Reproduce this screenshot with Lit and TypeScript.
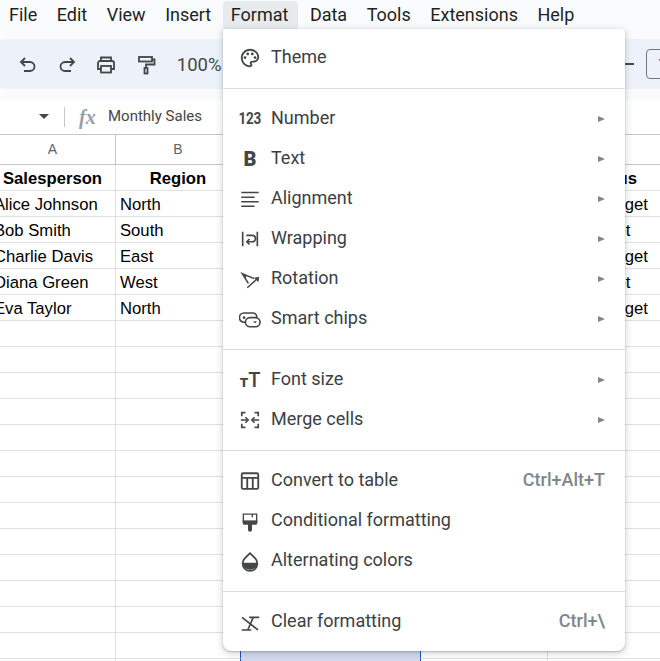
import { LitElement, html, css, svg } from "lit";
import { customElement } from "lit/decorators.js";

const ic = (body: unknown, cls = "ic") => html`<svg class=${cls} viewBox="0 0 24 24" fill="none" stroke="currentColor" stroke-width="2">${body}</svg>`;

const icons: Record<string, unknown> = {
  theme: ic(svg`<path stroke="none" fill="currentColor" fill-rule="evenodd" d="M12 2C6.490 2 2 6.490 2 12s4.490 10 10 10c1.380 0 2.500-1.120 2.500-2.500 0-.610-.230-1.200-.640-1.670-.080-.100-.130-.210-.130-.330 0-.280.220-.500.500-.500H16c3.310 0 6-2.690 6-6 0-4.960-4.490-9-10-9zm0 18c-4.410 0-8-3.590-8-8s3.590-8 8-8c4.410 0 8 3.140 8 7 0 2.210-1.790 4-4 4h-1.770c-1.380 0-2.500 1.120-2.500 2.500 0 .600.220 1.160.600 1.630.110.120.170.250.170.370 0 .280-.220.500-.500.500z"/><g stroke="none" fill="currentColor"><circle cx="6.500" cy="11.500" r="1.500"/><circle cx="9.500" cy="7.500" r="1.500"/><circle cx="14.500" cy="7.500" r="1.500"/><circle cx="17.500" cy="11.500" r="1.500"/></g>`),
  number: html`<span class="glyph num">123</span>`,
  text: html`<span class="glyph bold">B</span>`,
  align: ic(svg`<path stroke-width="1.700" d="M2.500 5h19M2.500 10h14.500M2.500 15h19M2.500 20h14.500"/>`),
  wrap: ic(svg`<path stroke-width="1.800" d="M4 4v16M20 4v16M8 8h6.500a3.500 3.500 0 0 1 0 7H9"/><path stroke-width="1.800" d="M11.500 12 8.500 15l3 3"/>`),
  rotate: ic(svg`<path stroke-width="1.700" d="M16.700 11.600 3.600 6.200 10.200 16.700M6.800 8 7 12.300"/><path stroke-width="1.700" d="M9 21.500 19 12.500"/><path stroke="none" fill="currentColor" d="M22 9.500 21.200 15.500 16.500 10.500Z"/>`),
  chips: ic(svg`<path stroke-width="1.800" d="M7 15.500H5.500a5 5 0 0 1 0-10H15a4.500 4.500 0 0 1 4.500 4.500"/><rect stroke-width="1.800" x="7" y="10.500" width="16" height="10" rx="5"/><circle cx="5.500" cy="10.500" r="1.500" stroke="none" fill="currentColor"/><path stroke="none" fill="currentColor" d="M15.500 14.500h4l-2 2.300z"/>`),
  size: html`<span class="glyph tt"><i>T</i><b>T</b></span>`,
  merge: ic(svg`<path stroke-width="1.800" d="M3 8V4h4M21 8V4h-4M3 16v4h4M21 16v4h-4M2 12h7M22 12h-7"/><path stroke-width="1.800" d="M7 9l3 3-3 3M17 9l-3 3 3 3"/>`),
  table: ic(svg`<rect x="3" y="3.500" width="18" height="17" rx="1.500"/><path d="M3 8.500h18M9 8.500v12M15 8.500v12"/>`),
  cond: ic(svg`<path stroke-width="1.500" d="M4.750 4.500h14.500v8H4.750z"/><path stroke="none" fill="currentColor" d="M4 11.500h16v3a1.500 1.500 0 0 1-1.500 1.500H14.200V21.500a2.200 2.200 0 0 1-4.400 0V16H5.500A1.500 1.500 0 0 1 4 14.500z"/><path stroke-width="1.500" d="M14.500 4.500V8"/>`),
  alt: ic(svg`<path d="M12 3.500 6.300 9.200a8 8 0 1 0 11.400 0z"/><path stroke="none" fill="currentColor" d="M4 14h16a8 7.500 0 0 1-16 0z"/>`),
  clear: ic(svg`<path stroke-width="1.800" d="M11 7h11M15.600 7 9.500 20.700M3 20.700h10.400M3.300 7 20.700 20.700"/>`),
};

type Item = { i: string; t: string; sub?: boolean; key?: string };
const groups: Item[][] = [
  [{ i: "theme", t: "Theme" }],
  [
    { i: "number", t: "Number", sub: true },
    { i: "text", t: "Text", sub: true },
    { i: "align", t: "Alignment", sub: true },
    { i: "wrap", t: "Wrapping", sub: true },
    { i: "rotate", t: "Rotation", sub: true },
    { i: "chips", t: "Smart chips", sub: true },
  ],
  [
    { i: "size", t: "Font size", sub: true },
    { i: "merge", t: "Merge cells", sub: true },
  ],
  [
    { i: "table", t: "Convert to table", key: "Ctrl+Alt+T" },
    { i: "cond", t: "Conditional formatting" },
    { i: "alt", t: "Alternating colors" },
  ],
  [{ i: "clear", t: "Clear formatting", key: "Ctrl+\\" }],
];

const menus = ["File", "Edit", "View", "Insert", "Format", "Data", "Tools", "Extensions", "Help"];

const rows: (string[] | null)[] = [
  ["Alice Johnson", "North", "Below Target"],
  ["Bob Smith", "South", "Met Target"],
  ["Charlie Davis", "East", "Below Target"],
  ["Diana Green", "West", "Met Target"],
  ["Eva Taylor", "North", "Below Target"],
];

@customElement("app-root")
export class AppRoot extends LitElement {
  static styles = css`
    :host { display: block; width: 660px; height: 661px; overflow: hidden; position: relative; background: #f9fbfd; font-family: Roboto, sans-serif; color: #1f1f1f; }
    .menubar { display: flex; height: 29px; padding: 1px 0 0 1px; gap: 3.500px; box-sizing: content-box; }
    .mb { padding: 0 8px; font-size: 18px; line-height: 28px; height: 28px; border-radius: 4px 4px 0 0; color: #1f1f1f; }
    .mb.on { background: #e8ebee; padding-right: 10px; }
    .toolbar { margin: 9px 0 0 -16px; height: 50px; box-sizing: border-box; padding-top: 2px; background: #edf2fa; border-radius: 24px 0 0 24px; display: flex; align-items: center; color: #444746; padding-left: 34px; }
    .tb { width: 20px; height: 20px; margin-right: 19.200px; flex: none; display: block; }
    .zoom { font-size: 18.500px; margin-left: 2px; width: 448px; flex: none; }
    .minus { width: 9px; height: 2px; background: #444746; flex: none; margin-top: -3px; }
    .fsbox { margin-left: 12px; width: 40px; height: 28px; border: 1px solid #747775; border-radius: 4px; flex: none; font-size: 14px; line-height: 28px; padding-left: 11px; box-sizing: content-box; margin-top: -2px; }
    .formula { margin-top: 11px; height: 34px; background: #fff; border-bottom: 1px solid #c7c7c7; display: flex; align-items: center; }
    .caret { margin-left: 39px; margin-top: -2px; width: 0; height: 0; border-left: 5px solid transparent; border-right: 5px solid transparent; border-top: 5px solid #444746; }
    .fsep { margin-left: 15px; width: 1px; height: 20px; background: #c7c7c7; }
    .fx { margin-left: 14px; font: italic 700 20px "Liberation Serif", serif; color: #9aa0a6; width: 29px; }
    .ftext { font-size: 15px; color: #444746; margin-top: -2px; }
    .sheet { background: #fff; height: 527px; overflow: hidden; }
    .grid { display: grid; grid-template-columns: 126px 125px 180px 127px 128px; margin-left: -10px; font: 16.670px "Liberation Sans", sans-serif; color: #000; }
    .hc { height: 29px; text-align: center; font: 14px/29px "Liberation Sans", sans-serif; color: #5f6368; border-right: 1px solid #c7c7c7; border-bottom: 1px solid #c7c7c7; }
    .c { box-sizing: border-box; height: 26px; line-height: 27px; padding: 0 4px; border-right: 1px solid #e1e1e1; border-bottom: 1px solid #e1e1e1; white-space: nowrap; overflow: hidden; }
    .c.th { font-weight: 700; text-align: center; padding: 0; }
    .c.sel { background: #d3d9ef; border-left: 1px solid #1a4fc4; border-right: 1px solid #1a4fc4; border-bottom-color: #d3d9ef; margin-left: -1px; }
    .menu { position: absolute; left: 223px; top: 29px; width: 402px; box-sizing: border-box; background: #fff; padding: 9px 0 9px; border-radius: 0 4px 8px 8px; box-shadow: 0 2px 6px 2px rgba(60,64,67,.15), 0 1px 2px rgba(60,64,67,.3); }
    .item { height: 40px; display: flex; align-items: center; padding: 0 20px 0 15px; color: #3c4043; }
    .iw { width: 24px; height: 24px; margin-right: 9px; display: flex; align-items: center; justify-content: center; color: #444746; flex: none; }
    .ic { width: 22px; height: 22px; display: block; }
    .glyph { font-family: Roboto, sans-serif; color: #444746; line-height: 1; white-space: nowrap; }
    .num { font-weight: 700; font-size: 16.500px; display: block; transform: scaleX(.82); letter-spacing: -.3px; }
    .bold { font-weight: 900; font-size: 20px; }
    .tt { display: flex; align-items: baseline; font-weight: 500; }
    .tt i { font-style: normal; font-size: 13.500px; font-weight: 900; }
    .tt b { font-size: 20px; font-weight: 500; margin-left: 0; }
    .lbl { flex: 1; font-size: 18px; margin-top: -4px; }
    .arrow { width: 0; height: 0; border-left: 7px solid #80868b; border-top: 3.500px solid transparent; border-bottom: 3.500px solid transparent; }
    .key { font-size: 18px; font-weight: 500; color: #80868b; margin-top: -4px; }
    .sep { height: 1px; background: #dadce0; margin: 10px 0; }
  `;

  render() {
    const cells = [];
    for (let r = 0; r < 20; r++) {
      const d = rows[r] ?? null;
      const sel = r >= 17;
      cells.push(html`
        <div class="c">${d?.[0] ?? ""}</div>
        <div class="c">${d?.[1] ?? ""}</div>
        <div class="c ${sel ? "sel" : ""}"></div>
        <div class="c"></div>
        <div class="c">${d?.[2] ?? ""}</div>`);
    }
    return html`
      <div class="menubar">
        ${menus.map((m) => html`<div class="mb ${m === "Format" ? "on" : ""}">${m}</div>`)}
      </div>
      <div class="toolbar">
        <svg class="tb" viewBox="0 0 20 20" fill="none" stroke="currentColor" stroke-width="1.800"><path d="M7 3 3 7l4 4M3 7h9a4.500 4.500 0 0 1 0 9H6"/></svg>
        <svg class="tb" viewBox="0 0 20 20" fill="none" stroke="currentColor" stroke-width="1.800"><path d="M13 3l4 4-4 4M17 7H8a4.500 4.500 0 0 0 0 9h6"/></svg>
        <svg class="tb" viewBox="0 0 20 20" fill="none" stroke="currentColor" stroke-width="1.800"><path d="M5 6V2.500h10V6M5 14H2V8a2 2 0 0 1 2-2h12a2 2 0 0 1 2 2v6h-3"/><rect x="5" y="11" width="10" height="6.500"/></svg>
        <svg class="tb" viewBox="0 0 20 20" fill="none" stroke="currentColor" stroke-width="1.800"><rect x="3" y="2" width="13" height="4.500"/><path d="M16 4.500h2.500v5H10V13"/><rect x="8.500" y="13" width="3" height="5.500"/></svg>
        <div class="zoom">100%</div>
        <div class="minus"></div>
        <div class="fsbox">11</div>
      </div>
      <div class="formula">
        <div class="caret"></div>
        <div class="fsep"></div>
        <div class="fx">fx</div>
        <div class="ftext">Monthly Sales</div>
      </div>
      <div class="sheet">
        <div class="grid">
          <div class="hc">A</div><div class="hc">B</div><div class="hc">C</div><div class="hc">D</div><div class="hc">E</div>
          <div class="c th">Salesperson</div><div class="c th">Region</div><div class="c th"></div><div class="c th"></div><div class="c th">Status</div>
          ${cells}
        </div>
      </div>
      <div class="menu">
        ${groups.map((g, gi) => html`
          ${gi ? html`<div class="sep"></div>` : ""}
          ${g.map((it) => html`
            <div class="item">
              <span class="iw">${icons[it.i]}</span>
              <span class="lbl">${it.t}</span>
              ${it.sub ? html`<span class="arrow"></span>` : ""}
              ${it.key ? html`<span class="key">${it.key}</span>` : ""}
            </div>`)}
        `)}
      </div>
    `;
  }
}
